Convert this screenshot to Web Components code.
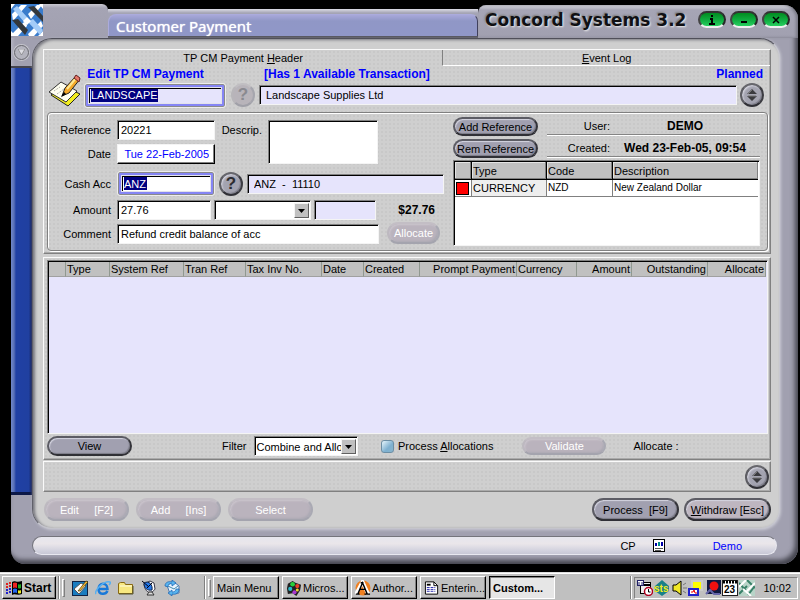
<!DOCTYPE html>
<html lang="en">
<head>
<meta charset="utf-8">
<title>Customer Payment - Concord Systems 3.2</title>
<style>
  html, body { margin: 0; height: 100%; background: #000; }
  body { font: 11px/14px "Liberation Sans", Arial, sans-serif; color: #000; }
</style>
</head>
<body>
<concord-desktop></concord-desktop>

<script>
const BASE = `*{box-sizing:border-box}button,input,select,textarea{font:inherit;color:inherit;margin:0;border-radius:0}
button{padding:0;border:0;background:none}[hidden]{display:none}svg{display:block}`;

function define(name, render) {
  customElements.define(name, class extends HTMLElement {
    connectedCallback() {
      if (this.shadowRoot) return;
      const attr = (key, fallback = '') => this.getAttribute(key) ?? fallback;
      this.attachShadow({ mode: 'open' }).innerHTML = `<style>${BASE}</style>` + render(attr, this);
    }
  });
}

const INSET = 'border:1px solid;border-color:#808080 #f4f4f4 #f4f4f4 #808080;box-shadow:inset 1px 1px #000;';

/* Rounded metallic push button */
define('pill-button', a => `
<style>
:host{display:block;height:20px}
button{width:100%;height:100%;border-radius:12px;display:flex;align-items:center;justify-content:center;white-space:pre;
 background:#a1a0b0;border:2px solid;border-color:#5c5c64 #34343a #303036 #5c5c64;box-shadow:inset 1px 1px 1px #d4d4e0,inset -1px -1px 1px #7c7c88}
:host([tone=light]) button{background:#beb6c0}
button:disabled{background:#bab3bd;color:#fff;border-color:#c3bec5 #a9a9b3 #a4a4ae #bdb9c0;box-shadow:inset 1px 1px 2px #ccc6ce,inset -1px -1px 2px #aaa8b2}
</style>
<button type="button" ${a('off') ? 'disabled' : ''}><span><slot></slot></span></button>`);

/* Round button holding a help mark or an up/down pair */
define('round-button', a => `
<style>
:host{display:block;width:24px;height:24px}
button{width:100%;height:100%;border-radius:50%;display:grid;place-items:center;background:#a3a3b0;border:2px solid;
 border-color:#66666c #3c3c42 #303036 #5c5c62;box-shadow:inset 1px 1px 2px #dcdce6,inset -1px -1px 1px #7c7c88;font:bold 17px/20px "Liberation Sans",Arial,sans-serif;color:#2c2c30}
button:disabled{background:#b8b4ba;color:#8a8a90;border-color:#c0bec2 #a6a6ae #a0a0a8 #b8b6ba;box-shadow:none}
</style>
<button type="button" ${a('off') ? 'disabled' : ''} aria-label="${a('label')}">${a('mark') ||
 '<svg width="12" height="14" viewBox="0 0 12 14"><path d="M1 6 6 1l5 5zM1 8h10l-5 5z" fill="#3a3a3e"/><path d="M2 6 6 2M2 8h8" stroke="#777" fill="none"/></svg>'}</button>`);

/* Labelled text box: plain, read-only, active (framed, value highlighted), date or multi-line */
define('text-field', a => {
  const kind = a('kind'), label = a('label'), mark = a('mark');
  const tag = kind === 'area'
    ? `<textarea id="f"></textarea>`
    : `<input id="f" type="text" value="${a('value')}" ${kind === 'readonly' ? 'readonly' : ''} ${label ? '' : `aria-label="${a('name')}"`}>`;
  return `
<style>
:host{display:flex;align-items:center;min-width:0}
label{flex:none;width:var(--label,63px);margin-right:6px;text-align:right}
.box{flex:1;min-width:0;height:var(--box,20px);background:#fff;${INSET}padding:2px 3px;display:flex}
input,textarea{display:block;width:100%;height:100%;min-width:0;padding:0;border:0;outline:0;background:transparent;resize:none}
:host([kind=readonly]) .box{background:#e6e4fc;padding-left:6px}
:host([kind=date]) .box{border-color:#f4f4f4 #000 #000 #f4f4f4;box-shadow:inset -1px -1px #808080;color:#00f;padding:2px 5px 2px 2px}
:host([kind=date]) input{text-align:right}
:host([kind=area]){align-items:flex-start}
:host([kind=area]) label{margin-top:3px}
.frame{flex:1;min-width:0;display:flex;border-radius:2px}
:host([kind=active]) .frame{border:1px solid #8a8a8a;outline:1px solid #ededed;outline-offset:0;margin:1px;height:var(--frame,23px);background:#8585f5;padding:2px}
:host([kind=active]) .box{height:100%;padding:1px 2px;background:var(--fill,#fff);outline:1px solid #e2e2ea;outline-offset:-1px}
:host([kind=active]) input{width:${mark}px;height:13px;background:#000080;color:#fff}
</style>
${label ? `<label for="f">${label}</label>` : ''}<div class="frame"><div class="box">${tag}</div></div>`;
});

/* Drop-down with a raised arrow */
define('drop-down', a => `
<style>
:host{display:flex;align-items:center;min-width:0}
label{margin-right:8px}
.box{flex:1;min-width:0;height:20px;background:#fff;${INSET}padding:2px 1px 1px 1px;display:grid;grid-template-columns:1fr 15px}
select{grid-area:1/1/2/3;appearance:none;border:0;background:none;padding:0 14px 0 0;outline:0;min-width:0;width:100%;text-overflow:clip;overflow:hidden}
i{grid-area:1/2;background:#c0c0c0;border:1px solid;border-color:#f4f4f4 #606060 #606060 #f4f4f4;display:grid;place-items:center;pointer-events:none}
</style>
${a('label') ? `<label for="s">${a('label')}</label>` : ''}
<div class="box"><select id="s" ${a('label') ? '' : `aria-label="${a('name')}"`}><option>${a('value')}</option></select>
<i><svg width="7" height="4"><path d="M0 0h7L3.500 4z"/></svg></i></div>`);

/* Raised panel */
define('raised-sheet', () => `
<style>
:host{display:block;border:1px solid;border-color:#fafafa #808080 #808080 #fafafa;box-shadow:inset -1px -1px #aaa;
 background:#cfcfcf radial-gradient(#c8c8c8 1px,transparent 1px) 0 0/4px 4px}
</style><slot></slot>`);

define('caption-line', a => `
<style>
:host{display:flex;align-items:center;border-bottom:1px solid #fff;box-shadow:inset 0 -1px #858585}
span{width:63px;text-align:right;flex:none}b{flex:1;text-align:center;font-size:12px;white-space:nowrap}
</style><span>${a('label')}</span><b><slot></slot></b>`);

define('reference-table', () => `
<style>
:host{display:block;background:#fff;${INSET}padding:1px;overflow:hidden}
table{width:100%;border-collapse:separate;border-spacing:0;table-layout:fixed}
th{height:18px;padding:0 1px;background:#c0c0c0;text-align:left;font-weight:400;border-right:1px solid #000;border-bottom:1px solid #000;box-shadow:inset -1px -1px #808080,inset 1px 1px #e4e4e4}
td{height:17px;padding:0 1px;border-right:1px solid #808080;border-bottom:1px solid #808080;white-space:nowrap}
th:last-child,td:last-child{border-right:0}
td:nth-child(2){background:#eee}td:nth-child(n+3){font-size:10px}
i{display:block;width:13px;height:13px;background:#f00;border:1px solid #000}
</style>
<table><colgroup><col style="width:17px"><col style="width:75px"><col style="width:66px"><col></colgroup>
<thead><tr><th aria-label="Colour"></th><th>Type</th><th>Code</th><th>Description</th></tr></thead>
<tbody><tr><td><i></i></td><td>CURRENCY</td><td>NZD</td><td>New Zealand Dollar</td></tr></tbody></table>`);

define('transaction-table', () => {
  const cols = [['', 17], ['Type', 44], ['System Ref', 74], ['Tran Ref', 62], ['Tax Inv No.', 76], ['Date', 42], ['Created', 56],
    ['Prompt Payment', 0, 1], ['Currency', 60], ['Amount', 55, 1], ['Outstanding', 76, 1], ['Allocate', 58, 1]];
  return `
<style>
:host{display:block;background:#e6e4fc;${INSET}padding:1px;overflow:hidden}
table{width:100%;border-spacing:0;table-layout:fixed}
th{height:15px;padding:0 1px;background:#c0c0c0;text-align:left;font-weight:400;line-height:14px;white-space:nowrap;border-right:1px solid #909890;border-bottom:1px solid #a0a0a0}
.r{text-align:right;padding-left:0}
</style>
<table><colgroup>${cols.map(c => `<col${c[1] ? ` style="width:${c[1]}px"` : ''}>`).join('')}</colgroup>
<thead><tr>${cols.map(c => `<th${c[2] ? ' class="r"' : ''}${c[0] ? '' : ' aria-label="Marker"'}>${c[0]}</th>`).join('')}</tr></thead></table>`;
});

define('payment-header', () => `
<style>
:host{display:block}
.tabs{display:flex;height:16px}
.tabs button{flex:400;text-align:center}
.tabs button+button{flex:328;border-left:1px solid #808080;border-bottom:1px solid #fff}
.id{display:grid;grid-template-columns:36px 142px 34px 1fr 31px;grid-template-rows:16px 26px;align-items:center;padding:0 2px 0 4px}
.id b{color:#00f;font-size:12px;line-height:15px}
.pic{grid-row:1/3;align-self:end}
.status{grid-column:4/6;display:flex;justify-content:space-between;padding:0 5px 0 4px}
.id text-field:first-of-type{--fill:#e6e4fc}
fieldset{margin:4px 2px 0 3px;padding:7px 7px 3px 0;min-width:0;height:139px;border:1px solid #808080;border-radius:4px;box-shadow:inset 1px 1px #fff,1px 1px #fff;display:flex;gap:9px}
.left{flex:1;min-width:0;display:flex;flex-direction:column}
.row{display:flex;align-items:center}
.right{flex:none;width:307px;display:grid;grid-template-columns:85px 1fr;grid-template-rows:19px 19px 85px;column-gap:9px;row-gap:3px;margin-top:-3px}
.right pill-button{height:19px}
.right reference-table{grid-column:1/3;margin-top:-1px}
.cut{height:2px;margin:4px 0 0 69px;background:#000}
</style>
<div class="tabs" role="tablist"><button type="button" role="tab" aria-selected="true">TP CM Payment <u>H</u>eader</button><button type="button" role="tab" aria-selected="false"><u>E</u>vent Log</button></div>
<div class="id">
 <svg class="pic" width="34" height="34" viewBox="0 0 34 34"><path d="M3 21 15 12l17 8-12 12z" fill="#f2ee20" stroke="#222"/><path d="M1 18 13 8l16 9-11 11z" fill="#fffff0" stroke="#333"/><path d="M6 17l6-4M9 20l7-5M13 23l5-4" stroke="#999" stroke-dasharray="1 1"/><path d="m14 22 3-8L28 2l4 3-11 14z" fill="#f4a828" stroke="#222"/><path d="m19 15 9-11" stroke="#ffe890" stroke-width="2"/><path d="m26 4 2-3 4 3-1 4z" fill="#e87868" stroke="#622"/><path d="m13 23 3-5 2 2z"/></svg>
 <b>&nbsp;Edit TP CM Payment</b><span></span>
 <b class="status"><span>[Has 1 Available Transaction]</span><span>Planned</span></b>
 <text-field kind="active" name="Edit TP CM Payment" value="LANDSCAPE" mark="67"></text-field>
 <round-button mark="?" off="1" label="Look up customer" style="margin-left:5px"></round-button>
 <text-field kind="readonly" name="Customer name" value="Landscape Supplies Ltd" style="margin-left:-1px"></text-field>
 <round-button label="Scroll" style="margin-left:3px"></round-button>
</div>
<fieldset aria-label="Payment details">
 <div class="left">
  <div class="row" style="align-items:flex-start">
   <div style="flex:167;display:grid;gap:4px"><text-field label="Reference" value="20221"></text-field><text-field kind="date" label="Date" value="Tue 22-Feb-2005"></text-field></div>
   <text-field kind="area" label="Descrip." style="flex:163;--label:47px;--box:44px"></text-field><span style="flex:66"></span>
  </div>
  <div class="row" style="margin-top:7px">
   <text-field kind="active" label="Cash Acc" value="ANZ" mark="23" style="flex:167"></text-field>
   <round-button mark="?" label="Look up account" style="margin:0 4px"></round-button>
   <text-field kind="readonly" name="Account" value="ANZ  -  11110" style="flex:197"></text-field>
  </div>
  <div class="row" style="margin-top:4px">
   <text-field label="Amount" value="27.76" style="flex:166"></text-field>
   <drop-down name="Currency" style="flex:99;margin:0 3px"></drop-down>
   <text-field kind="readonly" name="Rate" style="flex:63"></text-field>
   <b style="flex:60;text-align:right;padding-right:9px;font-size:12px">$27.76</b>
  </div>
  <div class="row" style="margin-top:4px">
   <text-field label="Comment" value="Refund credit balance of acc" style="flex:331"></text-field>
   <pill-button off="1" style="flex:53;height:22px;margin:-2px 4px 0 8px">Allocate</pill-button>
  </div>
  <div class="cut"></div>
 </div>
 <div class="right">
  <pill-button>Add Reference</pill-button><caption-line label="User:">DEMO</caption-line>
  <pill-button>Rem Reference</pill-button><caption-line label="Created:">Wed 23-Feb-05, 09:54</caption-line>
  <reference-table></reference-table>
 </div>
</fieldset>`);

define('transaction-list', () => `
<style>
:host{display:flex;flex-direction:column;height:100%;padding:2px 2px 1px 3px}
transaction-table{flex:1}
.tools{display:flex;align-items:center;height:24px}
label{display:flex;align-items:center;gap:4px}
input{appearance:none;width:13px;height:13px;border:1px solid #6c8ea4;border-radius:3px;background:linear-gradient(135deg,#e8f6fc,#7eb0d0 60%,#88b4cc)}
</style>
<transaction-table></transaction-table>
<div class="tools">
 <pill-button style="width:85px">View</pill-button>
 <drop-down label="Filter" value="Combine and Allocate" style="width:136px;margin-left:90px"></drop-down>
 <label style="margin-left:23px"><input type="checkbox"><span>Process <u>A</u>llocations</span></label>
 <pill-button off="1" style="width:84px;margin-left:29px;height:18px">Validate</pill-button>
 <span style="margin-left:27px">Allocate :</span>
</div>`);

define('status-bar', () => `
<style>
:host{display:flex;align-items:center;height:19px;border-radius:10px;background:linear-gradient(#e6e6ee,#eae6ea 40%,#d2d2de 80%,#c8c8d6);
 border:1px solid;border-color:#74747c #e8e8f0 #e8e8f0 #74747c;padding-right:34px;justify-content:flex-end}
span{color:#00f;margin-left:48px}svg{margin-left:17px}
</style>
CP<svg width="12" height="13"><rect x=".5" y=".5" width="11" height="12" fill="#fff" stroke="#000"/><path d="M3 4v3M9 3v4" stroke="#00a" stroke-width="2"/><path d="M6 3v4" stroke="#088" stroke-width="2"/><path d="M2 9.500h8M2 11.500h6" stroke="#555"/></svg><span>Demo</span>`);

/* Title strip: stepped top edge, blue title tab, brand and window buttons */
define('title-strip', () => {
  const btn = (label, d) => `<button type="button" aria-label="${label}"><svg width="12" height="12" viewBox="0 0 12 12" fill="none" stroke="#000" stroke-width="2">${d}</svg></button>`;
  return `
<style>
:host{display:flex;height:38px;align-items:stretch}
.lead{width:97px;margin-top:4px;background:linear-gradient(#c8c8d0,#a5a4b4 4px,#a1a0b0);border-top-right-radius:6px}
.mid{flex:1;margin-top:9px;background:linear-gradient(#dcdce6,#a4a4b4 4px);border-bottom:2px solid #55555e}
h1{margin:5px 0 0;height:22px;padding-left:7px;border:1px solid #ababdc;border-width:1px 1px 0;border-right-color:#40405c;border-radius:8px 7px 0 0;background:linear-gradient(#a8a8da,#9097c6 6px,#9097c8);
 color:#fff;font:400 15px/23px "Noto Sans","Open Sans",sans-serif;text-shadow:0 0 1px #fff}
.brand{flex:none;width:320px;margin-top:5px;padding:1px 8px 0 7px;border-radius:8px 14px 0 0;background:linear-gradient(#dadae2,#a6a5b5 5px,#a1a0b0);box-shadow:inset -2px 0 3px #777784;display:flex;align-items:flex-start}
.brand b{flex:1;font:bold 17px/29px "DejaVu Sans",sans-serif;color:#101014;text-shadow:1px 1px 2px #eee,-1px -1px 2px #777;white-space:nowrap}
.brand button{width:28px;height:17px;margin:5px 0 0 4px;border-radius:9px;border:2px solid;border-color:#333 #282828 #eee #444;background:linear-gradient(#008c20,#12b044 60%,#28d060);display:grid;place-items:center}
</style>
<div class="lead"><svg width="32" height="32" viewBox="0 0 32 32"><rect width="32" height="32" fill="#3a7ccc"/>
<g transform="translate(0 0)"><path d="M0 0h4l-4 5zM28 0h4v5zM0 27v5h5zM32 27v5h-5z" fill="#fff"/></g>
<path d="M1 10 10 1h6L2 17zM17 10l9-9h5L20 15zM1 30l14-14 1 6-9 10H2zM17 30l13-13 2 5-9 10h-5z" fill="#fff"/>
<path d="M2 5 6 2l10 11-2 6z" fill="#a4ccf8"/><path d="m17 3 6-1 9 10v6z" fill="#34383c"/>
<path d="m1 16 6-1 10 11-3 5z" fill="#34383c"/><path d="m17 18 5-3 10 11-3 5z" fill="#a4ccf8"/>
<path d="m12 17 4-4 4 4-4 4z" fill="#fff"/></svg></div>
<div class="mid"><h1>Customer Payment</h1></div>
<div class="brand"><b>Concord Systems 3.2</b>
${btn('About', '<path d="M6 1v2M4 5h2v5M3 10h6"/>')}${btn('Minimise', '<path d="M3 8h6"/>')}${btn('Close', '<path d="m3 3 6 6M9 3 3 9" stroke-width="1.500"/>')}</div>`;
});

define('side-rail', () => `
<style>
:host{display:flex;flex-direction:column;width:21px}
.top{height:30px;display:grid;place-items:center;border-bottom:2px solid #44444e;background:linear-gradient(90deg,#b4b4c2,#a1a0b0 4px)}
button{width:15px;height:15px;border:1px solid #66666e;border-radius:50%;background:#b4b4be;box-shadow:0 0 0 1px #c4c4cc;display:grid;place-items:center}
.blue{flex:1;background:linear-gradient(90deg,#7088c8,#5870b8 3px,#2040a4 5px,#2040a0 18px,#101848);border-bottom:3px solid #0c1848}
.end{height:34px}
</style>
<div class="top"><button type="button" aria-label="Menu"><svg width="7" height="6"><path d="M0 0h7L3.500 6z" fill="#dcdce2" stroke="#666" stroke-width=".5"/></svg></button></div><div class="blue"></div><div class="end"></div>`);

define('app-window', () => `
<style>
:host{flex:1;display:flex;flex-direction:column;margin:0 2px 8px 11px}
.shell{flex:1;display:flex;flex-direction:column;background:#a1a0b0;border-radius:0 0 16px 14px;box-shadow:inset -3px -4px 5px #44444e}
.body{flex:1;display:flex}
.panel{flex:1;min-width:0;margin:0 18px 0 0;padding:10px 8px 7px 10px;display:flex;flex-direction:column;border:1px solid;border-color:#50505a #c8c8d0 #c4c4cc #60606a;border-radius:20px;
 background:#cfcfcf;box-shadow:inset 2px 1px 3px #77777f,1px 1px 3px #cacad4}
.list{flex:1;margin-top:3px}
.bar{height:29px;display:flex;justify-content:flex-end;align-items:center;padding-right:1px}
.actions{display:flex;gap:7px;margin-top:6px;padding:0 0 0 1px}
.actions pill-button{width:85px;height:23px}
.actions .main{width:87px}
.main:nth-child(4){margin-left:auto}
.actions .main+.main{margin-left:-2px}
status-bar{margin:7px 21px 9px}
</style>
<title-strip></title-strip>
<div class="shell">
 <div class="body"><side-rail></side-rail>
 <main class="panel">
  <raised-sheet style="height:205px"><payment-header></payment-header></raised-sheet>
  <raised-sheet class="list"><transaction-list></transaction-list></raised-sheet>
  <raised-sheet style="height:31px;margin-top:1px"><div class="bar"><round-button label="Scroll notes"></round-button></div></raised-sheet>
  <div class="actions">
   <pill-button off="1">Edit     [F2]</pill-button><pill-button off="1">Add     [Ins]</pill-button><pill-button off="1">Select</pill-button>
   <pill-button class="main">Process  [F9]</pill-button><pill-button class="main" tone="light"><u>W</u>ithdraw [Esc]</pill-button>
  </div>
 </main></div>
 <status-bar></status-bar>
</div>`);

define('task-button', () => `
<style>
:host{display:block;height:23px;width:66px}
button{width:100%;height:100%;display:flex;align-items:center;gap:1px;padding:0 2px 0 3px;white-space:nowrap;background:#c0c0c0;border:1px solid;border-color:#fff #000 #000 #fff;box-shadow:inset -1px -1px #808080}
:host([pressed]) button{background:#e6e6e6;border-color:#000 #fff #fff #000;box-shadow:inset 1px 1px #808080;font-weight:bold}
:host([strong]) button{font-weight:bold;font-size:12px}
::slotted(svg){flex:none}
</style><button type="button"><slot></slot></button>`);

define('task-bar', () => `
<style>
:host{display:flex;align-items:center;height:28px;background:#c0c0c0;border-top:1px solid #dfdfdf;box-shadow:inset 0 1px #fff;padding:2px 2px 0;flex:none}
hr{width:2px;height:23px;margin:0 0 0 2px;border:0;border-left:1px solid #808080;border-right:1px solid #fff}
.grip{width:3px;height:18px;margin:0 0 0 2px;border:1px solid;border-color:#fff #808080 #808080 #fff}
nav{display:flex;gap:7px;margin-left:7px;width:130px}
nav button{width:16px}
.apps{display:flex;gap:3px;margin-left:2px}
.tray{margin-left:2px;width:164px;height:22px;border:1px solid;border-color:#808080 #fff #fff #808080;display:flex;align-items:center;padding:0 6px 0 2px;gap:1px}
time{margin-left:auto;font-size:11px}
svg text{font-family:"Liberation Sans",Arial,sans-serif;font-weight:bold}
</style>
<task-button strong style="width:54px"><svg width="17" height="16" viewBox="0 0 17 16"><path d="M6 2c3-2 4 1 10-1v13c-5 2-7-1-10 1z" fill="#000"/><path d="M7 3q2-1 4 0v5q-2-1-4 0z" fill="#e22"/><path d="M12 4q1 1 3 0v4q-2 1-3 0z" fill="#2a2"/><path d="M7 9q2-1 4 0v4q-2-1-4 0z" fill="#26e"/><path d="M12 10q1 1 3 0v3q-2 1-3 0z" fill="#ee2"/><path d="M0 4h2M3 3h2M0 7h2M3 6h2" stroke="#d22" stroke-width="2"/><path d="M0 10h2M3 9h2M0 13h2M3 12h2" stroke="#22c" stroke-width="2"/></svg>Start</task-button>
<hr><div class="grip"></div>
<nav aria-label="Quick launch">
<button type="button" aria-label="Show desktop"><svg width="16" height="16"><rect x=".5" y="1.500" width="15" height="14" fill="#1a7cc0" stroke="#124"/><path d="m2 9 7-6 5 3-7 8z" fill="#fff" stroke="#555"/><path d="m6 11 8-10 2 1-8 9z" fill="#f6b838" stroke="#430" stroke-width=".7"/></svg></button>
<button type="button" aria-label="Browser"><svg width="16" height="16" fill="none"><path d="M3.500 9h9c0-7-9-7-9 0 0 6 7 6 9 2" stroke="#1878d8" stroke-width="2.500"/><path d="M1 14C-1 11 9 0 15 2c1 1 0 2-1 3" stroke="#58b0f0" stroke-width="1.500"/></svg></button>
<button type="button" aria-label="Folder"><svg width="16" height="16"><path d="M.5 13.500v-10l2-1h4l1 2h7v9z" fill="#f8e880" stroke="#8a6a10"/><path d="M2 6h12" stroke="#fffce0"/><path d="M1 14h14V6" stroke="#553" fill="none"/></svg></button>
<button type="button" aria-label="Channels"><svg width="16" height="16"><path d="M3 4c1 10 8 10 11 5l-1-6-4-2z" fill="#fff" stroke="#334"/><path d="M3 3c0 5 3 8 8 7 1-5-3-10-8-7z" fill="#2478e8" stroke="#124"/><path d="m1 1 7 6M6 8l5-5" stroke="#001"/><path d="m8 12-2 3h7l-2-3z" fill="#ddd" stroke="#333"/></svg></button>
<button type="button" aria-label="Mail"><svg width="16" height="16"><path d="m3 5 7-3 5 4v7l-9 1z" fill="#e8f4ff" stroke="#4878b0"/><path d="m4 6 6 3 4-3" fill="none" stroke="#48a"/><path d="M1 6c0-4 4-5 7-4V0l4 3-4 3V4C5 3 4 5 4 7zM15 9c0 4-3 6-7 5v2l-4-3 4-3v2c2 0 4-1 4-3z" fill="#58b4ee" stroke="#1860b0" stroke-width=".7"/></svg></button>
</nav>
<hr><div class="grip"></div>
<div class="apps">
<task-button>Main Menu</task-button>
<task-button><svg width="16" height="16" viewBox="0 0 17 17"><path d="m1 9 1-5 5-3 3 2 6 2-1 6-4 6-4-3-5 1z" fill="#222"/><circle cx="7" cy="4.500" r="2.500" fill="#2ad03c"/><circle cx="12" cy="6.500" r="2.200" fill="#e8402c"/><circle cx="4.500" cy="9.500" r="2.200" fill="#28b8c8"/><circle cx="9" cy="13" r="2.200" fill="#a838d0"/><circle cx="12" cy="10.500" r="1.600" fill="#f0d830"/></svg>Micros...</task-button>
<task-button><svg width="16" height="16" viewBox="0 0 17 17"><circle cx="8.500" cy="8.500" r="8" fill="#f08020"/><path d="m1 15 7-13 6 13" fill="none" stroke="#fff" stroke-width="4"/><path d="m3 15 5-12 5 12M5 10h6M1 15h4M10 15h6M6 3h3" fill="none" stroke="#000" stroke-width="1.500"/></svg>Author...</task-button>
<task-button><svg width="16" height="16" viewBox="0 0 17 16"><path d="M1.500 1.500h9l4 4v9h-13z" fill="#fff" stroke="#000"/><path d="M10.500 1.500v4h4" fill="none" stroke="#000"/><path d="M3 4.500h4" stroke="#000" stroke-width="2"/><path d="M3 7.500h9M3 9.500h9M3 11.500h9" stroke="#22a" stroke-dasharray="3 1"/></svg>Enterin...</task-button>
<task-button pressed>Custom...</task-button>
</div>
<hr style="margin-left:auto">
<div class="tray">
<svg width="16" height="16"><rect x="3.500" y="2.500" width="10" height="11" fill="#eee" stroke="#000"/><path d="M3 5h11" stroke="#000" stroke-width="2"/><rect x=".5" y=".5" width="6" height="5" fill="#fff" stroke="#226"/><path d="M2 2v3M5 2v3" stroke="#226"/><circle cx="11.500" cy="11.500" r="4" fill="#fff" stroke="#b00020" stroke-width="1.500"/><path d="M11.500 9v3h2" fill="none" stroke="#000"/></svg>
<svg width="17" height="16"><path d="m8 0 7 6v5l-7 5-7-5V6z" fill="#188088"/><text x="0" y="12" font-size="10" fill="#f4ec20">sts</text></svg>
<svg width="15" height="16"><path d="M1 5h3l5-4v14l-5-4H1z" fill="#f0e828" stroke="#000"/><path d="m11 5 3-2M11 8h4M11 11l3 2" stroke="#777"/></svg>
<svg width="16" height="16"><rect x="4" y="1" width="10" height="9" fill="#ff0" stroke="#ccc" stroke-width="2"/><rect x="1" y="9" width="9" height="6" fill="#fff" stroke="#22c" stroke-width="2"/><path d="M3 12h2l1-2 1 3h2" stroke="#e00" fill="none"/></svg>
<svg width="16" height="16"><rect x="2" width="14" height="14" fill="#101840"/><circle cx="9" cy="6" r="4.500" fill="#f01010"/><path d="m1 14 4-4 4 4h6" fill="none" stroke="#66a" stroke-width="2"/></svg>
<svg width="16" height="16"><rect x=".5" y=".5" width="15" height="15" fill="#fff" stroke="#222"/><path d="M1 2h14" stroke="#000" stroke-width="3" stroke-dasharray="2 1"/><text x="2" y="13" font-size="10">23</text></svg>
<svg width="16" height="16"><rect width="16" height="16" fill="#b8d4c8"/><path d="m0 3 8 9M8 0l8 8M0 14 8 6M9 15l6-8" stroke="#388068" stroke-width="2"/><path d="m0 7 7-7M7 12l9-9M4 9l8 7" stroke="#fff" stroke-width="2"/></svg>
<time>10:02</time></div>`);

define('concord-desktop', () => `
<style>:host{display:flex;flex-direction:column;min-height:100vh}</style>
<app-window></app-window><task-bar></task-bar>`);
</script>
</body>
</html>
